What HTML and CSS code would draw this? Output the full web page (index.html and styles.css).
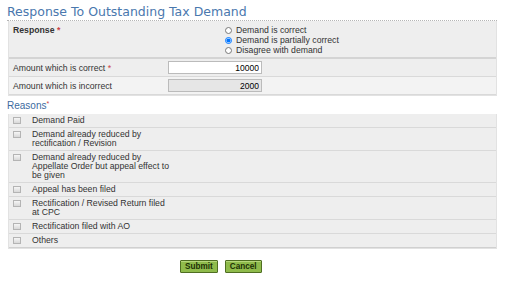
FILE: index.html
```html
<!DOCTYPE html>
<html lang="en">
<head>
    <meta charset="UTF-8">
    <meta name="viewport" content="width=device-width, initial-scale=1.0">
    <title>Response To Outstanding Tax Demand</title>
    <link rel="stylesheet" href="styles.css">
</head>
<body>
    <div class="container">
        <h1>Response To Outstanding Tax Demand</h1>

        <div class="panel">
            <div class="row response-row">
                <div class="label strong">Response <span class="req">*</span></div>
                <div class="options">
                    <label class="opt"><input type="radio" name="resp"> Demand is correct</label>
                    <label class="opt"><input type="radio" name="resp" checked> Demand is partially correct</label>
                    <label class="opt"><input type="radio" name="resp"> Disagree with demand</label>
                </div>
            </div>
            <div class="row amount-row">
                <div class="label">Amount which is correct <span class="req">*</span></div>
                <input class="amount" type="text" value="10000">
            </div>
            <div class="row amount-row last">
                <div class="label">Amount which is incorrect</div>
                <input class="amount readonly" type="text" value="2000" readonly>
            </div>
        </div>

        <h2>Reasons<span class="req">*</span></h2>

        <div class="panel reasons">
            <label class="reason"><input type="checkbox"><span>Demand Paid</span></label>
            <label class="reason"><input type="checkbox"><span>Demand already reduced by<br>rectification / Revision</span></label>
            <label class="reason"><input type="checkbox"><span>Demand already reduced by<br>Appellate Order but appeal effect to<br>be given</span></label>
            <label class="reason"><input type="checkbox"><span>Appeal has been filed</span></label>
            <label class="reason"><input type="checkbox"><span>Rectification / Revised Return filed<br>at CPC</span></label>
            <label class="reason"><input type="checkbox"><span>Rectification filed with AO</span></label>
            <label class="reason"><input type="checkbox"><span>Others</span></label>
        </div>

        <div class="actions">
            <button>Submit</button>
            <button>Cancel</button>
        </div>
    </div>
</body>
</html>
```

FILE: styles.css
```css
body {
    font-family: "Liberation Sans", Arial, sans-serif;
    font-size: 8.7px;
    color: #333;
    margin: 0;
    background: #fff;
}
.container {
    padding: 4px 11px 0 7px;
}
h1 {
    font-family: "DejaVu Sans", sans-serif;
    font-weight: normal;
    font-size: 12.5px;
    color: #4a78ae;
    margin: 0;
    padding-bottom: 1px;
    border-bottom: 1px dotted #b5b5b5;
    line-height: 15px;
}
.panel {
    margin-left: 1px;
    background: #eeeeee;
    border: 1px solid #e2e2e2;
    border-top: none;
}
.row {
    display: flex;
    align-items: center;
    border-bottom: 1px solid #d9d9d9;
}
.response-row {
    align-items: flex-start;
    height: 36px;
    border-bottom: 2px solid #d4d4d4;
}
.label {
    width: 155px;
    padding-left: 4px;
}
.strong {
    font-weight: bold;
    margin-top: 4px;
}
.req {
    color: #c44;
}
.options {
    display: flex;
    flex-direction: column;
    margin-left: 55px;
    margin-top: 4px;
}
.opt {
    display: flex;
    align-items: center;
    height: 10px;
    line-height: 10px;
}
.opt input {
    width: 7px;
    height: 7px;
    margin: 0 4px 0 2px;
}
.amount-row {
    height: 17px;
}
.amount-row.last {
    background: #f3f3f3;
}
.amount {
    width: 88px;
    height: 11px;
    padding: 0 2px;
    font-family: "Liberation Sans", Arial, sans-serif;
    font-size: 8.5px;
    text-align: right;
    border: 1px solid #bbb;
    background: #fff;
    color: #000;
}
.amount.readonly {
    background: #e6e6e6;
}
h2 {
    font-size: 10px;
    font-weight: normal;
    color: #3b6aa0;
    margin: 4px 0 3px 0;
}
h2 .req {
    font-size: 7px;
    vertical-align: top;
}
.reasons {
    display: flex;
    flex-direction: column;
}
.reason {
    display: flex;
    align-items: flex-start;
    border-bottom: 1px solid #d9d9d9;
    padding: 2px 0 2px 0;
    line-height: 9px;
}
.reason:last-child {
    border-bottom: 1px solid #d0d0d0;
}
.reason input {
    appearance: none;
    width: 8px;
    height: 7px;
    margin: 1px 11px 0 4px;
    border: 1px solid #b4b4b4;
    background: linear-gradient(#f6f6f6, #d8d8d8);
}
.reason span {
    white-space: nowrap;
}
.actions {
    display: flex;
    gap: 7px;
    padding-left: 173px;
    margin-top: 11px;
}
button {
    background: #8fbb4b;
    border: 1px solid #4f6e22;
    color: #1c3005;
    font-family: "Liberation Sans", Arial, sans-serif;
    font-weight: bold;
    font-size: 8.2px;
    height: 13px;
    padding: 0 4px;
    border-radius: 1px;
    box-shadow: inset 0 1px 0 #b6d67a;
    cursor: pointer;
}
```
